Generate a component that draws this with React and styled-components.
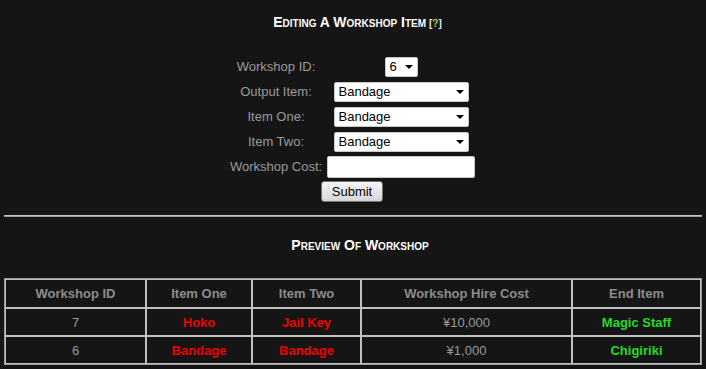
import React from 'react'
import styled, { createGlobalStyle } from 'styled-components'

const GlobalStyle = createGlobalStyle`
  html, body {
    margin: 0;
    background: #151515;
  }
  body {
    font-family: "Liberation Sans", Arial, sans-serif;
    font-size: 13px;
  }
`;

const Page = styled.div`
  padding: 4px;
  min-height: 361px;
`;

const Heading = styled.h3`
  margin: ${p => p.top}px 0 0;
  padding-left: ${p => p.shift || 0}px;
  height: 16px;
  line-height: 16px;
  text-align: center;
  color: #ffffff;
  font-size: 14px;
  font-weight: bold;
`;

const Small = styled.span`
  font-size: 10px;
  text-transform: uppercase;
`;

const Help = styled.span`
  font-size: 10px;
  color: #e8e8e8;
  margin-left: 3px;
  b {
    color: #99cc33;
  }
`;

const Form = styled.form`
  display: grid;
  grid-template-columns: 99px 151px;
  grid-auto-rows: 25px;
  justify-content: center;
  align-items: center;
  margin-top: 24px;
  padding-right: 3px;
`;

const Label = styled.label`
  text-align: center;
  color: #9a9a9a;
`;

const Field = styled.div`
  justify-self: center;
  position: relative;
  display: flex;
`;

const Select = styled.select`
  appearance: none;
  -webkit-appearance: none;
  width: ${p => p.w}px;
  height: 20px;
  padding: 0 0 0 4px;
  border: 1px solid #c8c8c8;
  border-radius: 2px;
  background: #fff;
  color: #000;
  font-family: "Liberation Sans", Arial, sans-serif;
  font-size: 13px;
  outline: none;
`;

const Arrow = styled.span`
  position: absolute;
  right: 5px;
  top: 8px;
  width: 0;
  height: 0;
  border-left: 4px solid transparent;
  border-right: 4px solid transparent;
  border-top: 4px solid #000;
  pointer-events: none;
`;

const TextInput = styled.input`
  width: 148px;
  height: 22px;
  box-sizing: border-box;
  border: 1px solid #c8c8c8;
  border-radius: 2px;
  background: #fff;
  outline: none;
`;

const ButtonRow = styled.div`
  grid-column: 1 / 3;
  display: flex;
  justify-content: center;
  padding-left: 1px;
`;

const Button = styled.button`
  width: 62px;
  height: 21px;
  padding: 0;
  border: 1px solid #707070;
  border-radius: 3px;
  background: linear-gradient(#f4f4f4, #e6e6e6 50%, #d6d6d6);
  color: #000;
  font-family: "Liberation Sans", Arial, sans-serif;
  font-size: 13px;
`;

const Rule = styled.hr`
  margin: 11px 0 0;
  height: 0;
  border: none;
  border-top: 1px solid #c4c4c4;
  border-bottom: 1px solid #9a9a9a;
`;

const Table = styled.table`
  width: 100%;
  margin-top: 25px;
  table-layout: fixed;
  border-collapse: separate;
  border-spacing: 0;
  border: 1px solid #9c9c9c;
`;

const Th = styled.th`
  box-sizing: border-box;
  width: ${p => (p.w ? `${p.w}px` : 'auto')};
  height: 29px;
  padding: 0;
  border: 1px solid #c0c0c0;
  color: #8c8c8c;
  font-weight: bold;
  text-align: center;
`;

const Td = styled.td`
  height: 26px;
  padding: 0;
  border: 1px solid #c0c0c0;
  text-align: center;
  color: ${p => (p.kind === 'bad' ? '#ee0000' : p.kind === 'good' ? '#22dd22' : '#9a9a9a')};
  font-weight: ${p => (p.kind ? 'bold' : 'normal')};
`;

const items = ['Bandage', 'Hoko', 'Jail Key', 'Magic Staff', 'Chigiriki']

const rows = [
  { id: 7, one: 'Hoko', two: 'Jail Key', cost: '¥10,000', end: 'Magic Staff' },
  { id: 6, one: 'Bandage', two: 'Bandage', cost: '¥1,000', end: 'Chigiriki' },
]

// small caps drawn by hand so the lower case sits at 0.7 of the capitals
function Caps({ text }) {
  return text.split(' ').map((word, i) => (
    <React.Fragment key={i}>
      {i > 0 && ' '}
      {word[0]}
      {word.length > 1 && <Small>{word.slice(1)}</Small>}
    </React.Fragment>
  ))
}

function ItemSelect({ w = 135, options = items }) {
  return (
    <Field>
      <Select w={w} defaultValue={options[0]}>
        {options.map(o => <option key={o}>{o}</option>)}
      </Select>
      <Arrow />
    </Field>
  )
}

export default function App() {
  return (
    <Page>
      <GlobalStyle />
      <Heading top={10} shift={9}>
        <Caps text="Editing A Workshop Item" />
        <Help>[<b>?</b>]</Help>
      </Heading>
      <Form onSubmit={e => e.preventDefault()}>
        <Label>Workshop ID:</Label>
        <ItemSelect w={33} options={['6', '7']} />
        <Label>Output Item:</Label>
        <ItemSelect />
        <Label>Item One:</Label>
        <ItemSelect />
        <Label>Item Two:</Label>
        <ItemSelect />
        <Label>Workshop Cost:</Label>
        <Field>
          <TextInput type="text" />
        </Field>
        <ButtonRow>
          <Button type="submit">Submit</Button>
        </ButtonRow>
      </Form>
      <Rule />
      <Heading top={20} shift={14}>
        <Caps text="Preview Of Workshop" />
      </Heading>
      <Table>
        <thead>
          <tr>
            <Th w={141}>Workshop ID</Th>
            <Th w={106}>Item One</Th>
            <Th w={109}>Item Two</Th>
            <Th w={211}>Workshop Hire Cost</Th>
            <Th>End Item</Th>
          </tr>
        </thead>
        <tbody>
          {rows.map(r => (
            <tr key={r.id}>
              <Td>{r.id}</Td>
              <Td kind="bad">{r.one}</Td>
              <Td kind="bad">{r.two}</Td>
              <Td>{r.cost}</Td>
              <Td kind="good">{r.end}</Td>
            </tr>
          ))}
        </tbody>
      </Table>
    </Page>
  )
}
